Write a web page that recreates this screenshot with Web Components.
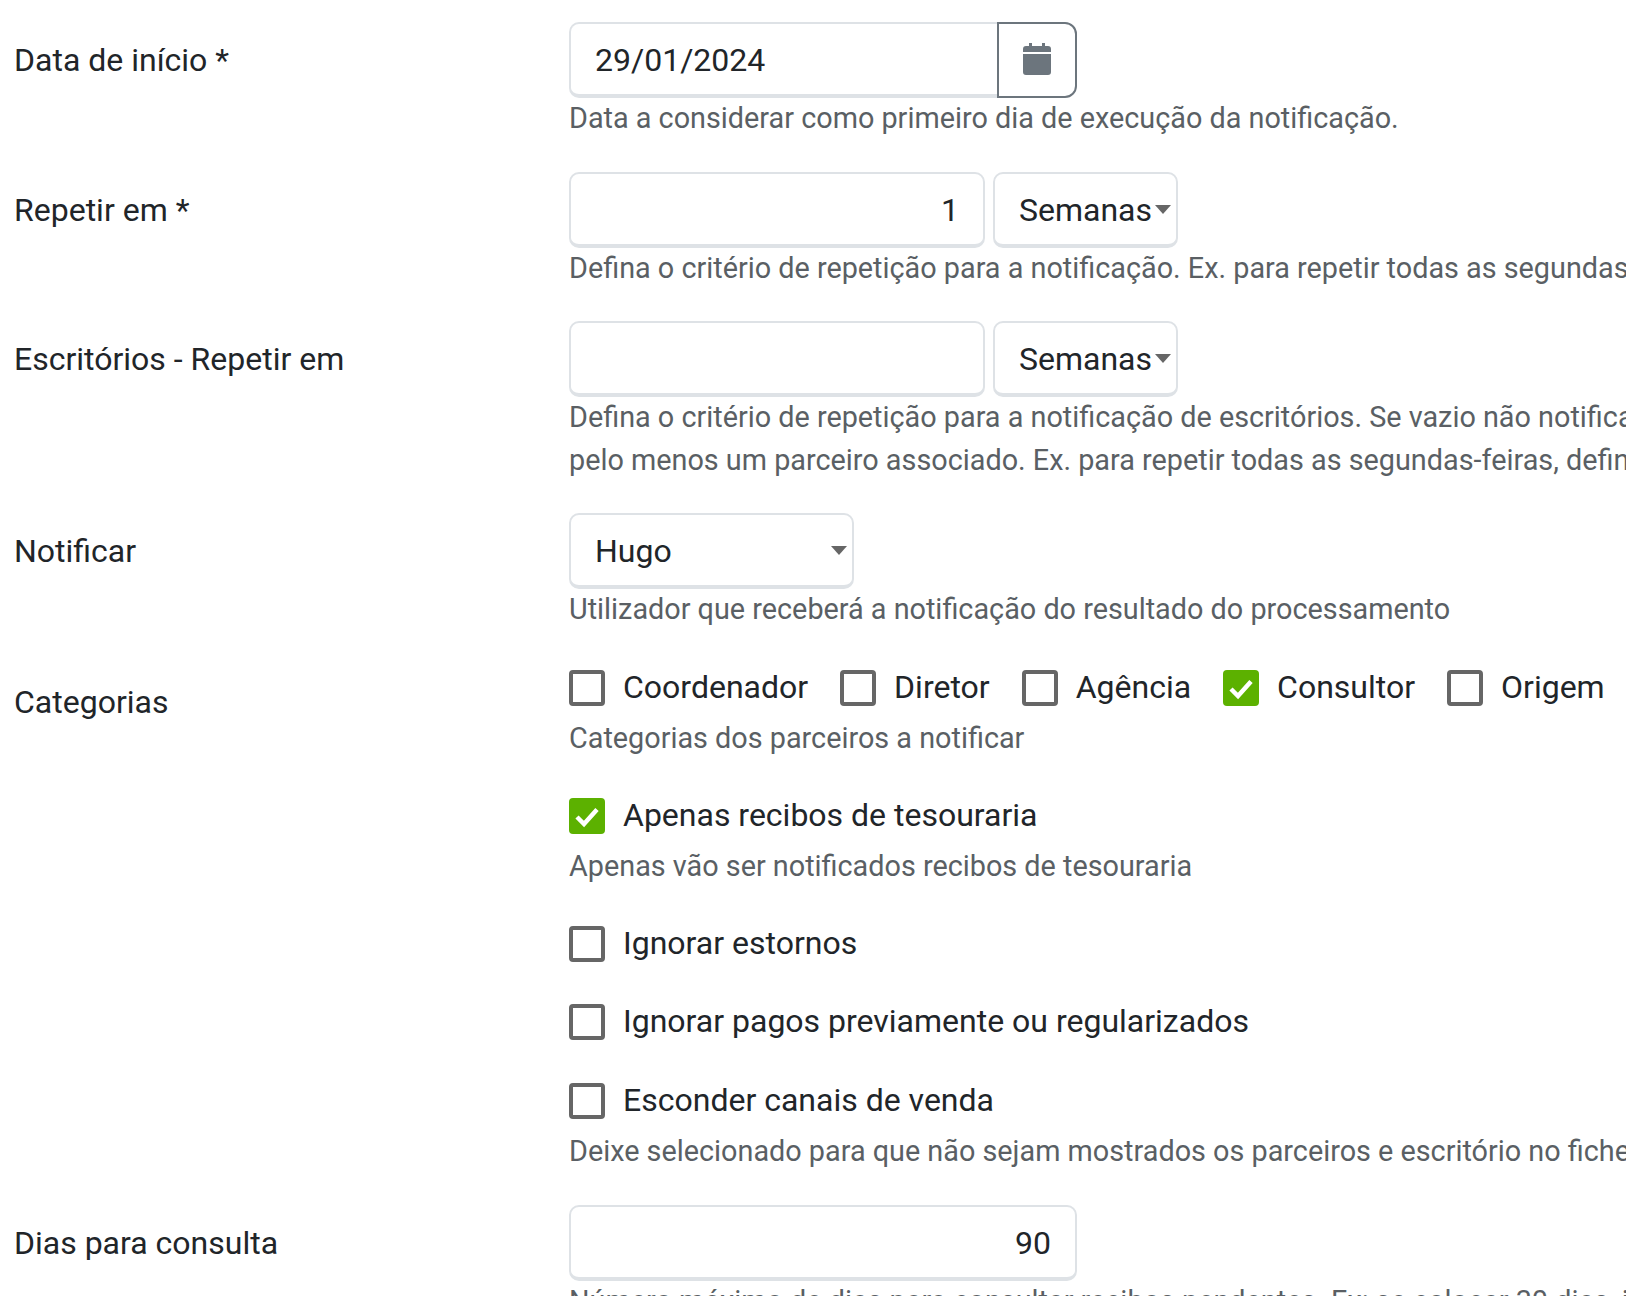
<!DOCTYPE html>
<html lang="pt">
<head>
<meta charset="utf-8">
<title>Notificação</title>
<style>
    html, body { margin: 0; padding: 0; background: #fff; overflow: hidden; height: 100%; }
    body { font-family: Roboto, "Liberation Sans", sans-serif; font-size: 32px; color: #212529; }
    notif-form { width: 1626px; height: 1296px; }
</style>
</head>
<body>
<notif-form>
    <form-row label="Data de início *" mb="32.2">
        <date-field value="29/01/2024"></date-field>
        <help-text>Data a considerar como primeiro dia de execução da notificação.</help-text>
    </form-row>
    <form-row label="Repetir em *" mb="32">
        <div style="display:flex;gap:8px">
            <text-field value="1" width="416"></text-field>
            <select-field value="Semanas" width="185"></select-field>
        </div>
        <help-text>Defina o critério de repetição para a notificação. Ex. para repetir todas as segundas-feiras, defina 1 semana.</help-text>
    </form-row>
    <form-row label="Escritórios - Repetir em" mb="31.6">
        <div style="display:flex;gap:8px">
            <text-field value="" width="416"></text-field>
            <select-field value="Semanas" width="185"></select-field>
        </div>
        <help-text>Defina o critério de repetição para a notificação de escritórios. Se vazio não notificará os escritórios que tenham</help-text>
        <help-text>pelo menos um parceiro associado. Ex. para repetir todas as segundas-feiras, defina 1 semana.</help-text>
    </form-row>
    <form-row label="Notificar" mb="32.9">
        <select-field value="Hugo" width="285"></select-field>
        <help-text>Utilizador que receberá a notificação do resultado do processamento</help-text>
    </form-row>
    <form-row label="Categorias" mb="32.1">
        <div style="display:flex;gap:32px">
            <check-box>Coordenador</check-box>
            <check-box>Diretor</check-box>
            <check-box>Agência</check-box>
            <check-box checked>Consultor</check-box>
            <check-box>Origem</check-box>
        </div>
        <help-text class="after-check">Categorias dos parceiros a notificar</help-text>
    </form-row>
    <form-row mb="32.1">
        <check-box checked>Apenas recibos de tesouraria</check-box>
        <help-text class="after-check">Apenas vão ser notificados recibos de tesouraria</help-text>
    </form-row>
    <form-row mb="30"><check-box>Ignorar estornos</check-box></form-row>
    <form-row mb="31"><check-box>Ignorar pagos previamente ou regularizados</check-box></form-row>
    <form-row mb="32.1">
        <check-box>Esconder canais de venda</check-box>
        <help-text class="after-check">Deixe selecionado para que não sejam mostrados os parceiros e escritório no ficheiro enviado.</help-text>
    </form-row>
    <form-row label="Dias para consulta" mb="0">
        <text-field value="90" width="508"></text-field>
        <help-text>Número máximo de dias para consultar recibos pendentes. Ex: se colocar 30 dias, irá</help-text>
    </form-row>
</notif-form>

<script>
class NotifForm extends HTMLElement {
    constructor() {
        super();
        this.attachShadow({ mode: 'open' }).innerHTML = `
            <style>
                :host { display: block; padding: 22px 0 0 14px; box-sizing: border-box; overflow: hidden; }
            </style>
            <slot></slot>
        `;
    }
}

class FormRow extends HTMLElement {
    constructor() {
        super();
        this.attachShadow({ mode: 'open' });
    }

    connectedCallback() {
        const label = this.getAttribute('label') || '';
        const mb = this.getAttribute('mb') || '0';
        this.shadowRoot.innerHTML = `
            <style>
                :host { display: grid; grid-template-columns: 555px 1060px; margin-bottom: ${mb}px; }
                .label { font-size: 32px; line-height: 48px; padding: 14px 0; color: #212529; }
                .control { min-width: 0; }
            </style>
            <div class="label">${label}</div>
            <div class="control"><slot></slot></div>
        `;
    }
}

const FIELD_STYLE = `
    .box {
        height: 76px; box-sizing: border-box; background: #fff;
        border: 2px solid #dee2e6; border-bottom-width: 4px; border-radius: 10px;
        font-size: 32px; line-height: 48px; padding: 12px 24px 10px; color: #212529;
        white-space: nowrap;
    }
`;

class TextField extends HTMLElement {
    constructor() {
        super();
        this.attachShadow({ mode: 'open' });
    }

    connectedCallback() {
        this.shadowRoot.innerHTML = `
            <style>
                :host { display: block; width: ${this.getAttribute('width')}px; }
                ${FIELD_STYLE}
                .box { text-align: right; }
            </style>
            <div class="box">${this.getAttribute('value')}</div>
        `;
    }
}

class DateField extends HTMLElement {
    constructor() {
        super();
        this.attachShadow({ mode: 'open' });
    }

    connectedCallback() {
        this.shadowRoot.innerHTML = `
            <style>
                :host { display: flex; width: 508px; }
                ${FIELD_STYLE}
                .box { flex: 1; border-right: 0; border-radius: 10px 0 0 10px; }
                button {
                    width: 80px; height: 76px; box-sizing: border-box; padding: 0; background: #fff;
                    border: 2px solid #6c757d; border-radius: 0 12px 12px 0;
                    display: flex; align-items: center; justify-content: center;
                }
                svg { width: 28px; height: 32px; fill: #6c757d; display: block; margin-top: -3px; }
            </style>
            <div class="box">${this.getAttribute('value')}</div>
            <button type="button">
                <svg viewBox="0 0 28 32"><path d="M6 0h3v3h10V0h3v3h3a3 3 0 0 1 3 3v3H0V6a3 3 0 0 1 3-3h3zM0 11h28v18a3 3 0 0 1-3 3H3a3 3 0 0 1-3-3z"/></svg>
            </button>
        `;
    }
}

class SelectField extends HTMLElement {
    constructor() {
        super();
        this.attachShadow({ mode: 'open' });
    }

    connectedCallback() {
        this.shadowRoot.innerHTML = `
            <style>
                :host { display: block; width: ${this.getAttribute('width')}px; }
                ${FIELD_STYLE}
                .box { position: relative; }
                .caret {
                    position: absolute; right: 5px; top: 31px; width: 0; height: 0;
                    border-left: 8px solid transparent; border-right: 8px solid transparent;
                    border-top: 9px solid #666;
                }
            </style>
            <div class="box">${this.getAttribute('value')}<span class="caret"></span></div>
        `;
    }
}

class CheckBox extends HTMLElement {
    constructor() {
        super();
        this.attachShadow({ mode: 'open' });
    }

    connectedCallback() {
        const on = this.hasAttribute('checked');
        this.shadowRoot.innerHTML = `
            <style>
                :host { display: flex; align-items: center; height: 48px; font-size: 32px; color: #212529; white-space: nowrap; }
                .mark {
                    width: 36px; height: 36px; box-sizing: border-box; border-radius: 4px; margin-right: 18px;
                    border: 4px solid #666; background: #fff; flex: none;
                }
                .mark.on { border: 0; background: #5cb100; }
                svg { width: 36px; height: 36px; display: block; }
                .text { margin-top: -2px; }
            </style>
            <span class="mark ${on ? 'on' : ''}">${on ? '<svg viewBox="0 0 36 36"><path d="M8 19l7 7 13-14.5" fill="none" stroke="#fff" stroke-width="4.5"/></svg>' : ''}</span>
            <span class="text"><slot></slot></span>
        `;
    }
}

class HelpText extends HTMLElement {
    constructor() {
        super();
        this.attachShadow({ mode: 'open' }).innerHTML = `
            <style>
                :host { display: block; font-size: 28.8px; line-height: 42.6px; color: #5a5f64; white-space: nowrap; }
                :host(:first-of-type) { margin-top: -1px; }
                :host(.after-check) { margin-top: 5.3px; }
            </style>
            <slot></slot>
        `;
    }
}

customElements.define('notif-form', NotifForm);
customElements.define('form-row', FormRow);
customElements.define('text-field', TextField);
customElements.define('date-field', DateField);
customElements.define('select-field', SelectField);
customElements.define('check-box', CheckBox);
customElements.define('help-text', HelpText);
</script>
</body>
</html>
